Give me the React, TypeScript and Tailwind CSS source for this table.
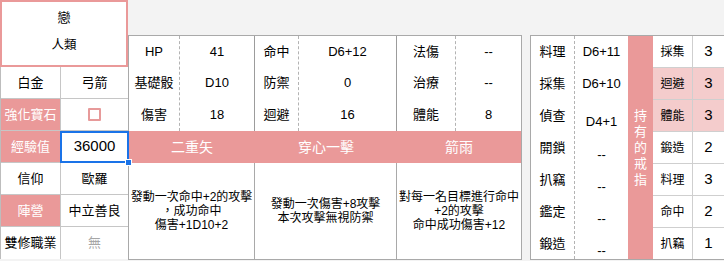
const pink = "bg-[#ea9999]";

type Pair = [string, string];

const leftRows: { label: string; value: string; hl?: boolean }[] = [
    { label: "白金", value: "弓箭" },
    { label: "強化寶石", value: "", hl: true },
    { label: "經驗值", value: "36000", hl: true },
    { label: "信仰", value: "歐羅" },
    { label: "陣營", value: "中立善良", hl: true },
    { label: "雙修職業", value: "無" },
];

const statGroups: { width: string; labelW: string; rows: Pair[]; last?: boolean }[] = [
    { width: "w-[126px]", labelW: "w-[51px]", rows: [["HP", "41"], ["基礎骰", "D10"], ["傷害", "18"]] },
    { width: "w-[142px]", labelW: "w-[44px]", rows: [["命中", "D6+12"], ["防禦", "0"], ["迴避", "16"]] },
    { width: "w-[124px]", labelW: "w-[59px]", rows: [["法傷", "--"], ["治療", "--"], ["體能", "8"]], last: true },
];

const skills: { name: string; lines: string[]; width: string; last?: boolean }[] = [
    { name: "二重矢", lines: ["發動一次命中+2的攻擊", "，成功命中", "傷害+1D10+2"], width: "w-[126px]" },
    { name: "穿心一擊", lines: ["發動一次傷害+8攻擊", "本次攻擊無視防禦"], width: "w-[142px]" },
    { name: "箭雨", lines: ["對每一名目標進行命中", "+2的攻擊", "命中成功傷害+12"], width: "w-[124px]", last: true },
];

const rowHeights = ["h-[31px]", "h-[32px]", "h-[32px]"];

// values drift down a few pixels from the third row on
const lifeSkills: { label: string; value: string; pad: string }[] = [
    { label: "料理", value: "D6+11", pad: "" },
    { label: "採集", value: "D6+10", pad: "" },
    { label: "偵查", value: "D4+1", pad: "pt-[12px]" },
    { label: "開鎖", value: "--", pad: "pt-[14px]" },
    { label: "扒竊", value: "--", pad: "pt-[14px]" },
    { label: "鑑定", value: "--", pad: "pt-[14px]" },
    { label: "鍛造", value: "--", pad: "pt-[14px]" },
];

const rings: { label: string; value: string; hl?: boolean }[] = [
    { label: "採集", value: "3" },
    { label: "迴避", value: "3", hl: true },
    { label: "體能", value: "3", hl: true },
    { label: "鍛造", value: "2" },
    { label: "料理", value: "3" },
    { label: "命中", value: "2" },
    { label: "扒竊", value: "1" },
];

const LeftPanel = () => (
    <div className="w-[128px] flex flex-col shrink-0">
        <div className="h-[67px] border-2 border-[#ea9999] bg-white flex flex-col items-center pt-[7px] gap-[9px]">
            <span className="h-[18px] leading-[18px]">戀</span>
            <span className="h-[18px] leading-[18px] text-[12.5px]">人類</span>
        </div>
        <div className="border-l border-[#bdbdbd] bg-white">
            {leftRows.map((r, i) => (
                <div key={r.label} className={`flex h-[32px] ${i < leftRows.length - 1 ? "border-b" : ""} border-[#c6c6c6]`}>
                    <div
                        className={`w-[60px] border-r border-[#c6c6c6] flex items-center justify-center ${r.hl ? `${pink} text-white` : ""}`}
                    >
                        {r.label}
                    </div>
                    <div className="w-[67px] relative flex items-center justify-center">
                        {r.label === "強化寶石" && (
                            <span className="w-[13px] h-[13px] border-2 border-[#e79a9a] rounded-[1px] bg-white" />
                        )}
                        {r.label === "經驗值" && (
                            <>
                                <span className="text-[15px]">{r.value}</span>
                                <div className="absolute -left-[1px] -right-[1px] top-0 -bottom-[1px] border-2 border-[#1a73e8] z-10" />
                                <div className="absolute -right-[4px] -bottom-[4px] w-[7px] h-[7px] bg-[#1a73e8] border border-white z-20" />
                            </>
                        )}
                        {r.label === "雙修職業" && <span className="text-[#a6a6a6]">{r.value}</span>}
                        {!["強化寶石", "經驗值", "雙修職業"].includes(r.label) && <span>{r.value}</span>}
                    </div>
                </div>
            ))}
        </div>
    </div>
);

const MiddlePanel = () => (
    <div className="mt-[35px] w-[394px] border border-[#a9a9a9] bg-white flex flex-col shrink-0">
        <div className="flex">
            {statGroups.map((g) => (
                <div key={g.rows[0][0]} className={`${g.width} flex ${g.last ? "" : "border-r border-[#9c9c9c]"}`}>
                    <div className={`${g.labelW} border-r border-dashed border-[#b3b3b3] flex flex-col`}>
                        {g.rows.map(([label], i) => (
                            <div key={label} className={`${rowHeights[i]} flex items-center justify-center`}>
                                {label}
                            </div>
                        ))}
                    </div>
                    <div className="flex-1 flex flex-col">
                        {g.rows.map(([label, value], i) => (
                            <div key={label} className={`${rowHeights[i]} flex items-center justify-center`}>
                                {value}
                            </div>
                        ))}
                    </div>
                </div>
            ))}
        </div>
        <div className={`flex h-[32px] ${pink}`}>
            {skills.map((s) => (
                <div key={s.name} className={`${s.width} flex items-center justify-center text-white text-[14px]`}>
                    {s.name}
                </div>
            ))}
        </div>
        <div className="flex h-[96px]">
            {skills.map((s) => (
                <div
                    key={s.name}
                    className={`${s.width} flex flex-col items-center justify-center text-[12px] leading-[14px] text-center ${s.last ? "" : "border-r border-[#a9a9a9]"}`}
                >
                    {s.lines.map((l) => (
                        <span key={l}>{l}</span>
                    ))}
                </div>
            ))}
        </div>
    </div>
);

const RightPanel = () => (
    <div className="mt-[35px] ml-[8px] w-[194px] h-[225px] border-t border-l border-b border-[#a9a9a9] bg-white flex shrink-0">
        <div className="w-[44px] border-r border-dashed border-[#b3b3b3] flex flex-col">
            {lifeSkills.map((s, i) => (
                <div key={s.label} className={`${i === lifeSkills.length - 1 ? "h-[31px]" : "h-[32px]"} flex items-center justify-center`}>
                    {s.label}
                </div>
            ))}
        </div>
        <div className="w-[53px] flex flex-col">
            {lifeSkills.map((s, i) => (
                <div
                    key={s.label}
                    className={`${i === lifeSkills.length - 1 ? "h-[31px]" : "h-[32px]"} ${s.pad} flex items-center justify-center`}
                >
                    {s.value}
                </div>
            ))}
        </div>
        <div className={`w-[25px] ${pink} flex flex-col items-center justify-center text-white text-[13px] leading-[16px]`}>
            {"持有的戒指".split("").map((c) => (
                <span key={c}>{c}</span>
            ))}
        </div>
        <div className="w-[71px] flex flex-col">
            {rings.map((r, i) => (
                <div
                    key={r.label}
                    className={`flex ${i === rings.length - 1 ? "h-[31px]" : "h-[32px] border-b"} border-[#cfcfcf] ${r.hl ? "bg-[#f4cccc]" : ""}`}
                >
                    <div className="w-[40px] border-r border-[#cfcfcf] flex items-center justify-center text-[12px]">
                        {r.label}
                    </div>
                    <div className="w-[31px] flex items-center justify-center text-[15px]">{r.value}</div>
                </div>
            ))}
        </div>
    </div>
);

export default function App() {
    return (
        <div className="w-[724px] h-[261px] bg-[#f3f3f3] flex items-start overflow-hidden text-[13px] text-black font-['Liberation_Sans','Noto_Sans_CJK_TC',sans-serif]">
            <LeftPanel />
            <MiddlePanel />
            <RightPanel />
        </div>
    );
}
